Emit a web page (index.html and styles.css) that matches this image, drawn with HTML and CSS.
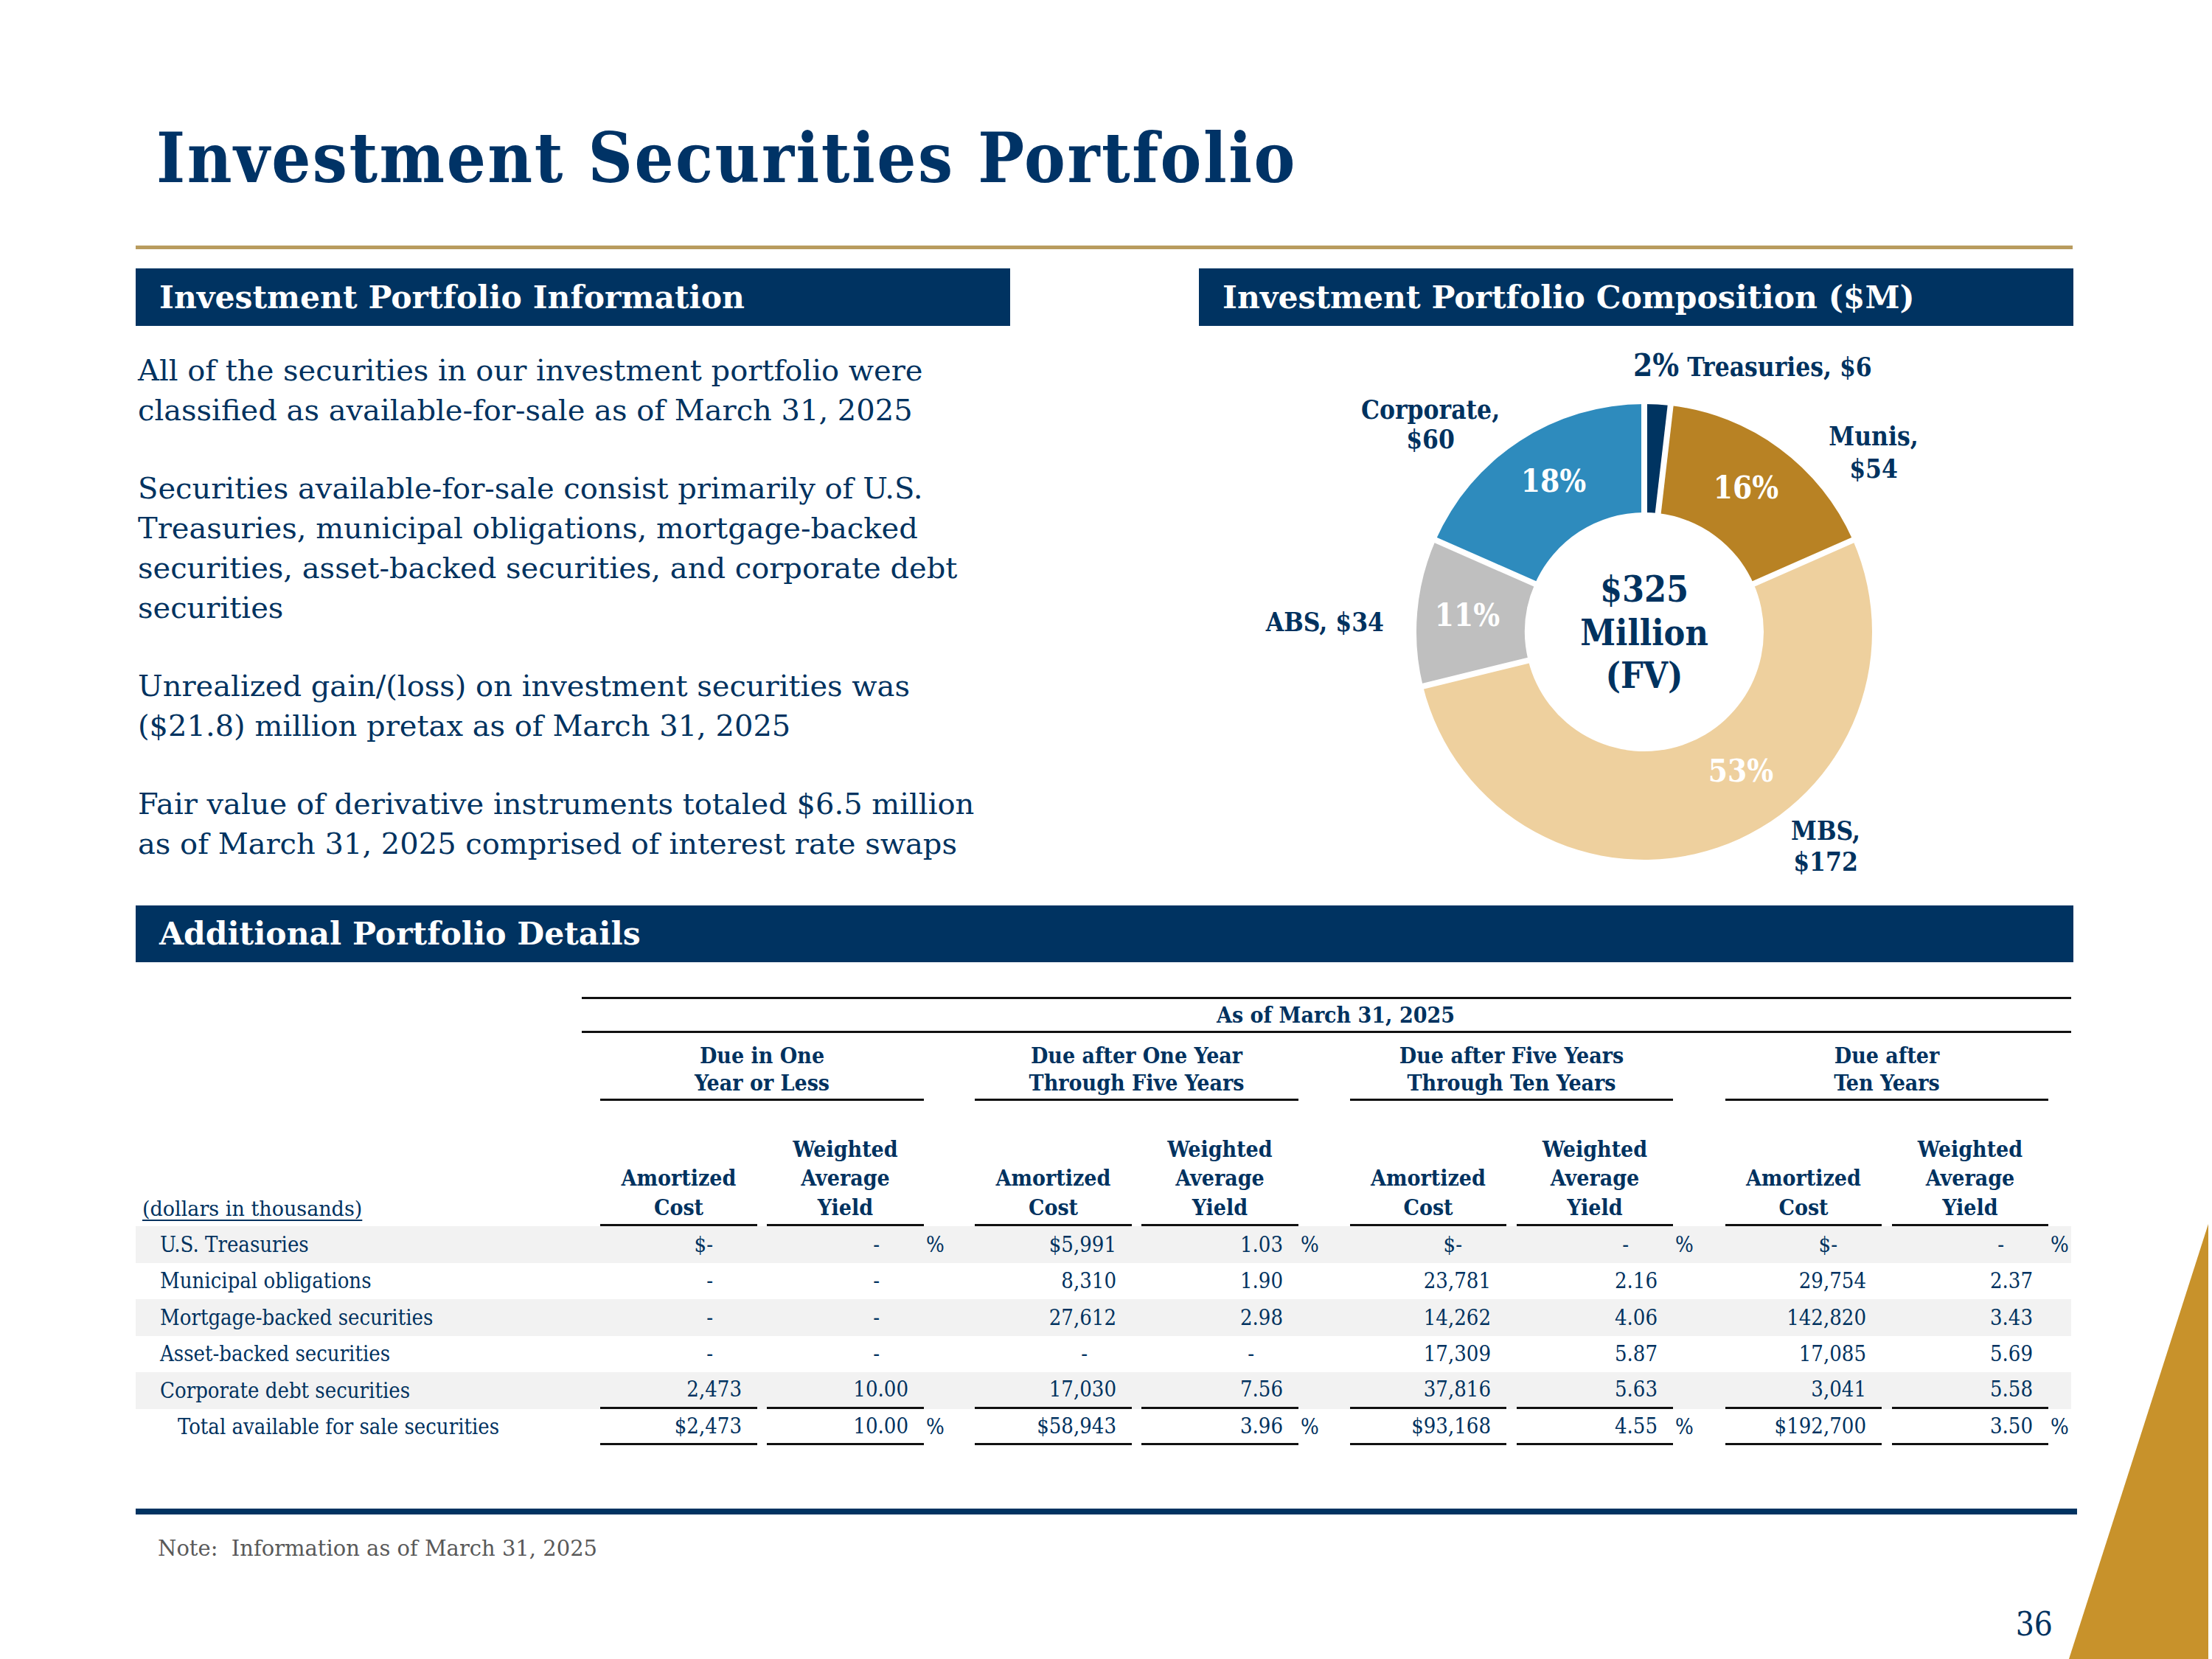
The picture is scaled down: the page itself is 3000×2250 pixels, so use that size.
FILE: index.html
```html
<!DOCTYPE html>
<html lang="en">
<head>
<meta charset="utf-8">
<title>Investment Securities Portfolio</title>
<link rel="stylesheet" href="styles.css">
</head>
<body>
<div class="slide">
  <header class="title-wrap">
    <h1 class="title">Investment Securities Portfolio</h1>
  </header>
  <div class="gold-rule"></div>

  <div class="top-row">
    <section class="info">
      <h2 class="bar">Investment Portfolio Information</h2>
      <div class="info-text">
        <p>All of the securities in our investment portfolio were<br>classified as available-for-sale as of March 31, 2025</p>
        <p>Securities available-for-sale consist primarily of U.S.<br>Treasuries, municipal obligations, mortgage-backed<br>securities, asset-backed securities, and corporate debt<br>securities</p>
        <p>Unrealized gain/(loss) on investment securities was<br>($21.8) million pretax as of March 31, 2025</p>
        <p>Fair value of derivative instruments totaled $6.5 million<br>as of March 31, 2025 comprised of interest rate swaps</p>
      </div>
    </section>
    <section class="comp">
      <h2 class="bar">Investment Portfolio Composition ($M)</h2>
      <svg class="donut" width="1186" height="786" viewBox="0 0 1186 786">
        <path class="s-tre" d="M604,106 A309,309 0 0 1 639.66,108.06 L622.69,254.08 A162,162 0 0 0 604,253 Z"/>
        <path class="s-mun" d="M639.66,108.06 A309,309 0 0 1 886.85,290.59 L752.29,349.77 A162,162 0 0 0 622.69,254.08 Z"/>
        <path class="s-mbs" d="M886.85,290.59 A309,309 0 1 1 303.92,488.71 L446.68,453.64 A162,162 0 1 0 752.29,349.77 Z"/>
        <path class="s-abs" d="M303.92,488.71 A309,309 0 0 1 321.15,290.59 L455.71,349.77 A162,162 0 0 0 446.68,453.64 Z"/>
        <path class="s-cor" d="M321.15,290.59 A309,309 0 0 1 604,106 L604,253 A162,162 0 0 0 455.71,349.77 Z"/>
        <g class="sep">
          <line x1="604" y1="265" x2="604" y2="95"/>
          <line x1="621.31" y1="266" x2="640.92" y2="97.14"/>
          <line x1="741.31" y1="354.61" x2="896.92" y2="286.16"/>
          <line x1="458.33" y1="450.78" x2="293.24" y2="491.33"/>
          <line x1="466.69" y1="354.61" x2="311.08" y2="286.16"/>
        </g>
        <text class="lbl" x="589" y="68"><tspan class="lbl-big">2%</tspan> Treasuries, $6</text>
        <text class="lbl" x="314" y="126" text-anchor="middle">Corporate,</text>
        <text class="lbl" x="314" y="166" text-anchor="middle">$60</text>
        <text class="lbl" x="915" y="162" text-anchor="middle">Munis,</text>
        <text class="lbl" x="915" y="206" text-anchor="middle">$54</text>
        <text class="lbl" x="251" y="414" text-anchor="end">ABS, $34</text>
        <text class="lbl" x="850" y="697" text-anchor="middle">MBS,</text>
        <text class="lbl" x="850" y="739" text-anchor="middle">$172</text>
        <text class="pctl" x="481" y="225" text-anchor="middle">18%</text>
        <text class="pctl" x="742" y="234" text-anchor="middle">16%</text>
        <text class="pctl" x="364" y="407" text-anchor="middle">11%</text>
        <text class="pctl" x="735" y="618" text-anchor="middle">53%</text>
        <text class="ctr" x="604" y="374" text-anchor="middle">$325</text>
        <text class="ctr" x="604" y="433" text-anchor="middle">Million</text>
        <text class="ctr" x="604" y="491" text-anchor="middle">(FV)</text>
      </svg>
    </section>
  </div>

  <h2 class="bar bar-wide">Additional Portfolio Details</h2>

  <div class="tbl">
    <div class="row row-asof">
      <div class="asof">As of March 31, 2025</div>
    </div>
    <div class="row row-grp">
      <div class="grp g1">Due in One<br>Year or Less</div>
      <div class="grp g2">Due after One Year<br>Through Five Years</div>
      <div class="grp g3">Due after Five Years<br>Through Ten Years</div>
      <div class="grp g4">Due after<br>Ten Years</div>
    </div>
    <div class="row row-sub">
      <div class="units"><span>(dollars in thousands)</span></div>
      <div class="sub ga1">Amortized<br>Cost</div>
      <div class="sub gb1">Weighted<br>Average<br>Yield</div>
      <div class="sub ga2">Amortized<br>Cost</div>
      <div class="sub gb2">Weighted<br>Average<br>Yield</div>
      <div class="sub ga3">Amortized<br>Cost</div>
      <div class="sub gb3">Weighted<br>Average<br>Yield</div>
      <div class="sub ga4">Amortized<br>Cost</div>
      <div class="sub gb4">Weighted<br>Average<br>Yield</div>
    </div>

    <div class="row data shade">
      <div class="lbl-cell">U.S. Treasuries</div>
      <div class="cell dash ga1">$-</div>
      <div class="cell dash gb1">-</div>
      <div class="cell pct p1">%</div>
      <div class="cell ga2">$5,991</div>
      <div class="cell gb2">1.03</div>
      <div class="cell pct p2">%</div>
      <div class="cell dash ga3">$-</div>
      <div class="cell dash gb3">-</div>
      <div class="cell pct p3">%</div>
      <div class="cell dash ga4">$-</div>
      <div class="cell dash gb4">-</div>
      <div class="cell pct p4">%</div>
    </div>
    <div class="row data">
      <div class="lbl-cell">Municipal obligations</div>
      <div class="cell dash ga1">-</div>
      <div class="cell dash gb1">-</div>
      <div class="cell ga2">8,310</div>
      <div class="cell gb2">1.90</div>
      <div class="cell ga3">23,781</div>
      <div class="cell gb3">2.16</div>
      <div class="cell ga4">29,754</div>
      <div class="cell gb4">2.37</div>
    </div>
    <div class="row data shade">
      <div class="lbl-cell">Mortgage-backed securities</div>
      <div class="cell dash ga1">-</div>
      <div class="cell dash gb1">-</div>
      <div class="cell ga2">27,612</div>
      <div class="cell gb2">2.98</div>
      <div class="cell ga3">14,262</div>
      <div class="cell gb3">4.06</div>
      <div class="cell ga4">142,820</div>
      <div class="cell gb4">3.43</div>
    </div>
    <div class="row data">
      <div class="lbl-cell">Asset-backed securities</div>
      <div class="cell dash ga1">-</div>
      <div class="cell dash gb1">-</div>
      <div class="cell dash ga2">-</div>
      <div class="cell dash gb2">-</div>
      <div class="cell ga3">17,309</div>
      <div class="cell gb3">5.87</div>
      <div class="cell ga4">17,085</div>
      <div class="cell gb4">5.69</div>
    </div>
    <div class="row data shade uline">
      <div class="lbl-cell">Corporate debt securities</div>
      <div class="cell ga1">2,473</div>
      <div class="cell gb1">10.00</div>
      <div class="cell ga2">17,030</div>
      <div class="cell gb2">7.56</div>
      <div class="cell ga3">37,816</div>
      <div class="cell gb3">5.63</div>
      <div class="cell ga4">3,041</div>
      <div class="cell gb4">5.58</div>
    </div>
    <div class="row data uline total">
      <div class="lbl-cell">Total available for sale securities</div>
      <div class="cell ga1">$2,473</div>
      <div class="cell gb1">10.00</div>
      <div class="cell pct p1">%</div>
      <div class="cell ga2">$58,943</div>
      <div class="cell gb2">3.96</div>
      <div class="cell pct p2">%</div>
      <div class="cell ga3">$93,168</div>
      <div class="cell gb3">4.55</div>
      <div class="cell pct p3">%</div>
      <div class="cell ga4">$192,700</div>
      <div class="cell gb4">3.50</div>
      <div class="cell pct p4">%</div>
    </div>
  </div>

  <div class="bottom-rule"></div>
  <footer class="footer">
    <p class="note">Note:&nbsp; Information as of March 31, 2025</p>
    <p class="pagenum">36</p>
  </footer>
  <div class="corner"></div>
</div>
</body>
</html>
```

FILE: styles.css
```css
html, body {
  margin: 0;
  padding: 0;
  background: #ffffff;
}

body {
  width: 3000px;
  height: 2250px;
  overflow: hidden;
}

.slide {
  position: relative;
  width: 3000px;
  height: 2250px;
  box-sizing: border-box;
  padding-left: 184px;
  font-family: "DejaVu Serif Condensed", "DejaVu Serif", serif;
  font-stretch: condensed;
  color: #00325f;
}

h1, h2, p {
  margin: 0;
  font-weight: normal;
}

.title-wrap {
  height: 333px;
  box-sizing: border-box;
  padding-top: 168px;
  padding-left: 28px;
}

.title {
  font-size: 93px;
  line-height: 93px;
  font-weight: bold;
  letter-spacing: 2.5px;
  color: #003366;
  white-space: nowrap;
}

.gold-rule {
  width: 2627px;
  height: 5px;
  background: #b99c5f;
}

.top-row {
  display: flex;
  gap: 256px;
  margin-top: 26px;
  height: 864px;
}

.info,
.comp {
  width: 1186px;
  flex: none;
}

.bar {
  height: 78px;
  box-sizing: border-box;
  padding-left: 32px;
  background: #003361;
  color: #ffffff;
  font-family: "DejaVu Serif", serif;
  font-stretch: normal;
  font-size: 42.5px;
  line-height: 78px;
  font-weight: bold;
  white-space: nowrap;
}

.bar-wide {
  width: 2628px;
  height: 77px;
  line-height: 77px;
}

.info-text {
  padding-top: 33px;
  padding-left: 3px;
  font-family: "DejaVu Serif", serif;
  font-stretch: normal;
  font-size: 40px;
  line-height: 54px;
  white-space: nowrap;
}

.info-text p + p {
  margin-top: 52px;
}

.donut {
  display: block;
}

.s-tre { fill: #003461; }
.s-mun { fill: #b88224; }
.s-mbs { fill: #eed09e; }
.s-abs { fill: #bfbfbf; }
.s-cor { fill: #2e8bbd; }

.sep line {
  stroke: #ffffff;
  stroke-width: 8;
}

.lbl {
  font-size: 35px;
  font-weight: bold;
  fill: #00325f;
}

.lbl-big {
  font-size: 42px;
}

.pctl {
  font-size: 42px;
  font-weight: bold;
  fill: #ffffff;
}

.ctr {
  font-size: 48px;
  font-weight: bold;
  fill: #00325f;
}

/* ---------- table ---------- */
.tbl {
  margin-top: 47px;
  width: 2625px;
  font-size: 29px;
}

.row {
  display: grid;
  grid-template-columns: 605px 25px 213px 13px 213px 69px 213px 13px 213px 70px 212px 14px 212px 71px 212px 14px 212px 31px;
}

.asof {
  grid-column: 2 / -1;
  height: 49px;
  box-sizing: border-box;
  border-top: 3px solid #111111;
  border-bottom: 3px solid #111111;
  padding-left: 25px;
  text-align: center;
  font-size: 30px;
  line-height: 43px;
  font-weight: bold;
}

.grp {
  height: 92px;
  box-sizing: border-box;
  padding-top: 12px;
  border-bottom: 3px solid #111111;
  text-align: center;
  font-size: 30px;
  line-height: 37px;
  font-weight: bold;
  white-space: nowrap;
}

.g1 { grid-column: 3 / 6; }
.g2 { grid-column: 7 / 10; }
.g3 { grid-column: 11 / 14; }
.g4 { grid-column: 15 / 18; }

.row-sub {
  height: 170px;
}

.sub {
  display: flex;
  flex-direction: column;
  justify-content: flex-end;
  box-sizing: border-box;
  padding-bottom: 3px;
  border-bottom: 3px solid #111111;
  text-align: center;
  font-size: 30px;
  line-height: 39.5px;
  font-weight: bold;
  white-space: nowrap;
}

.units {
  grid-column: 1;
  display: flex;
  align-items: flex-end;
  padding-left: 9px;
  padding-bottom: 3px;
  font-family: "DejaVu Serif", serif;
  font-stretch: normal;
  font-size: 27px;
  line-height: 40px;
}

.units span {
  text-decoration: underline;
  text-underline-offset: 5px;
}

.ga1 { grid-column: 3; }
.gb1 { grid-column: 5; }
.p1  { grid-column: 6; }
.ga2 { grid-column: 7; }
.gb2 { grid-column: 9; }
.p2  { grid-column: 10; }
.ga3 { grid-column: 11; }
.gb3 { grid-column: 13; }
.p3  { grid-column: 14; }
.ga4 { grid-column: 15; }
.gb4 { grid-column: 17; }
.p4  { grid-column: 18; }

.data {
  height: 49.5px;
}

.shade {
  background: #f2f2f2;
}

.lbl-cell {
  grid-column: 1;
  display: flex;
  align-items: center;
  padding-left: 33px;
  white-space: nowrap;
}

.total .lbl-cell {
  padding-left: 57px;
}

.cell {
  display: flex;
  align-items: center;
  justify-content: flex-end;
  box-sizing: border-box;
  padding-right: 21px;
  white-space: nowrap;
}

.cell.dash {
  padding-right: 60px;
}

.cell.pct {
  justify-content: flex-start;
  padding-right: 0;
  padding-left: 3px;
}

.uline .cell:not(.pct) {
  border-bottom: 3px solid #111111;
}

/* ---------- footer ---------- */
.bottom-rule {
  margin-top: 86px;
  width: 2633px;
  height: 8px;
  background: #003361;
}

.footer {
  width: 2633px;
}

.note {
  margin-top: 26px;
  padding-left: 30px;
  font-family: "DejaVu Serif", serif;
  font-stretch: normal;
  font-size: 29px;
  line-height: 40px;
  color: #595959;
}

.pagenum {
  margin-top: 61px;
  padding-right: 33px;
  text-align: right;
  font-size: 44px;
  line-height: 44px;
}

.corner {
  position: absolute;
  left: 2806px;
  top: 1660px;
  width: 189px;
  height: 590px;
  background: #c8922b;
  clip-path: polygon(0 100%, 100% 0, 100% 100%);
}
```
